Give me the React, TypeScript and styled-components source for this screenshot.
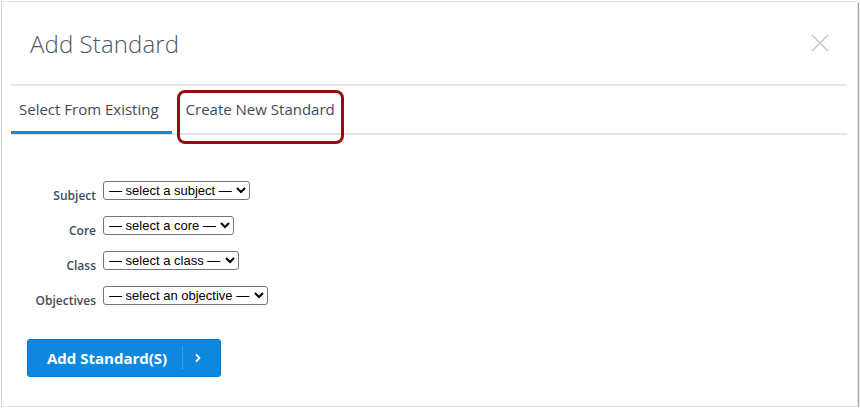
import React from "react";
import styled, { createGlobalStyle } from "styled-components";

const Global = createGlobalStyle`
  html, body { margin: 0; padding: 0; background: #ffffff; }
  body { font-family: "Open Sans", "Liberation Sans", Arial, sans-serif; }
`;

const Dialog = styled.div`
  box-sizing: border-box;
  margin: 1px 0 0 1px;
  width: 857px;
  height: 406px;
  background: #fff;
  border: 1px solid #e4e4e4;
  border-left: 1px solid #cfcfcf;
  box-shadow: 1px 2px 1px rgba(0, 0, 0, 0.35);
  display: flex;
  flex-direction: column;
`;

const Header = styled.header`
  height: 82px;
  margin: 0 10px 0 9px;
  padding-left: 19px;
  padding-right: 17px;
  border-bottom: 2px solid #e6e6e6;
  display: flex;
  align-items: center;
  justify-content: space-between;
`;

const Title = styled.h1`
  margin: 0;
  font-size: 24px;
  font-weight: 300;
  color: #4d5866;
  letter-spacing: 0.1px;
`;

const CloseButton = styled.button`
  border: 0;
  background: none;
  padding: 0;
  width: 20px;
  height: 20px;
  display: flex;
  align-items: center;
  justify-content: center;
  cursor: pointer;
`;

const TabBar = styled.nav`
  margin: 0 10px 0 9px;
  height: 47px;
  border-bottom: 2px solid #e4e4e4;
  display: flex;
`;

const Tab = styled.div<{ $active?: boolean; $flagged?: boolean }>`
  position: relative;
  box-sizing: border-box;
  height: 48px;
  padding: ${(p) => (p.$active ? "0 13px 0 8px" : "0 0 0 14px")};
  display: flex;
  align-items: center;
  font-size: 15px;
  color: #3f4b5a;
  border-bottom: 3px solid ${(p) => (p.$active ? "#0e8ae2" : "transparent")};
  ${(p) =>
    p.$flagged &&
    `
    &::after {
      content: "";
      position: absolute;
      left: 5px;
      top: 4px;
      width: 167px;
      height: 54px;
      box-sizing: border-box;
      border: 3px solid #8d1114;
      border-radius: 8px;
    }
  `}
`;

const Body = styled.div`
  padding: 46px 0 0 25px;
  display: flex;
  flex-direction: column;
`;

const Form = styled.div`
  display: grid;
  grid-template-columns: 69px auto;
  column-gap: 7px;
  row-gap: 16px;
  justify-content: start;
  align-items: center;
`;

const Label = styled.label`
  text-align: right;
  font-size: 12px;
  font-weight: 600;
  color: #3f4b5a;
  margin-top: 5px;
  margin-bottom: -5px;
`;

const Select = styled.select`
  justify-self: start;
  font-family: "Liberation Sans", Arial, sans-serif;
  font-size: 13px;
  height: 19px;
  padding: 0 1px;
  color: #000;
  background: #fff;
  border: 1px solid #767676;
  border-radius: 3px;
`;

const PrimaryButton = styled.button`
  margin-top: 34px;
  width: 194px;
  height: 38px;
  box-sizing: border-box;
  display: flex;
  align-items: center;
  padding: 0 0 0 19px;
  background: #0e88df;
  border: 1px solid #0b7cd0;
  border-radius: 3px;
  color: #fff;
  font-family: "Open Sans", "Liberation Sans", Arial, sans-serif;
  font-size: 15px;
  font-weight: 700;
  cursor: pointer;
`;

const ButtonText = styled.span`
  padding-right: 15px;
  border-right: 1px dotted rgba(255, 255, 255, 0.35);
  line-height: 22px;
`;

const ButtonChevron = styled.span`
  display: flex;
  align-items: center;
  padding-left: 11px;
`;

const rows = [
  { label: "Subject", text: "— select a subject —" },
  { label: "Core", text: "— select a core —" },
  { label: "Class", text: "— select a class —" },
  { label: "Objectives", text: "— select an objective —" },
];

export default function App() {
  return (
    <>
      <Global />
      <Dialog>
        <Header>
          <Title>Add Standard</Title>
          <CloseButton aria-label="Close">
            <svg width="18" height="18" viewBox="0 0 18 18">
              <path d="M1 1 L17 17 M17 1 L1 17" stroke="#c9c9c9" strokeWidth="1.6" fill="none" />
            </svg>
          </CloseButton>
        </Header>
        <TabBar>
          <Tab $active>Select From Existing</Tab>
          <Tab $flagged>Create New Standard</Tab>
        </TabBar>
        <Body>
          <Form>
            {rows.map((r) => (
              <React.Fragment key={r.label}>
                <Label>{r.label}</Label>
                <Select defaultValue="">
                  <option value="">{r.text}</option>
                </Select>
              </React.Fragment>
            ))}
          </Form>
          <PrimaryButton>
            <ButtonText>Add Standard(S)</ButtonText>
            <ButtonChevron>
              <svg width="8" height="10" viewBox="0 0 8 10">
                <path d="M2.5 2 L5.5 5 L2.5 8" stroke="#fff" strokeWidth="1.8" fill="none" strokeLinecap="round" strokeLinejoin="round" />
              </svg>
            </ButtonChevron>
          </PrimaryButton>
        </Body>
      </Dialog>
    </>
  );
}
